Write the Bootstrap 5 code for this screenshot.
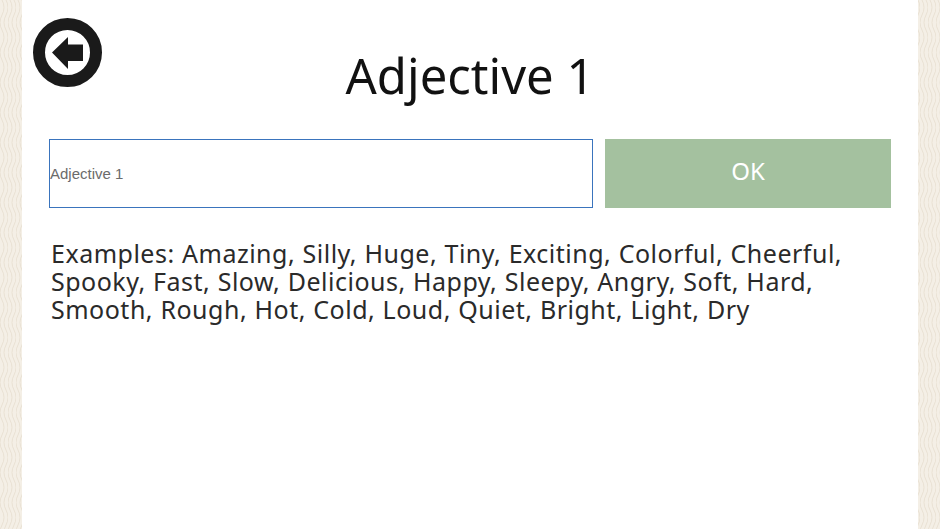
<!DOCTYPE html>
<html lang="en">
<head>
<meta charset="utf-8">
<title>Adjective 1</title>
<link rel="stylesheet" href="https://cdn.jsdelivr.net/npm/bootstrap@5.3.0/dist/css/bootstrap.min.css">
<style>
html,body{height:100%;overflow:hidden}
body{background-color:#f4efe6;background-image:url("data:image/svg+xml,%3Csvg xmlns='http://www.w3.org/2000/svg' width='8' height='30'%3E%3Cpath d='M2 0q4 7.500 0 15t0 15M6 0q4 7.500 0 15t0 15' fill='none' stroke='%23e9e1d3' stroke-width='1'/%3E%3C/svg%3E");font-family:"Noto Sans",sans-serif;color:#1c1c1c}
.sheet{width:896px;height:529px;margin-left:22px;background:#fff;padding:0 27px;position:relative}
.back-btn{position:absolute;left:11px;top:18px;width:70px;height:70px;display:block}
.head-title{font-size:49px;font-weight:400;line-height:60px;margin:0;padding-top:45px;height:139px;text-align:center;color:#111;font-family:"Noto Sans",sans-serif}
.word-input.form-control{width:544px;height:69px;border:1px solid #3a74bd;border-radius:0;padding:0;font-family:"Liberation Sans",sans-serif;font-size:15px;color:#666;flex:none;box-shadow:none}
.word-input.form-control::placeholder{color:#6b6b6b;opacity:1}
.ok-btn.btn{width:286px;height:69px;background:#a4c19f;border:0;border-radius:0;color:#fff;font-size:24px;padding:0 0 6px;margin-left:12px}
.hints{font-size:25px;letter-spacing:.5px;word-spacing:.4px;line-height:28px;color:#2a2a2a;margin:31px 0 0 2px;white-space:nowrap}
</style>
</head>
<body>
<div class="sheet">
<a href="#" class="back-btn" aria-label="Back">
<svg viewBox="0 0 70 70" width="70" height="70"><circle cx="34.500" cy="34.500" r="28.500" fill="#fff" stroke="#1a1a1a" stroke-width="12"/><path d="M19 34.500 35 19V26.500H50V43H35V51Z" fill="#1a1a1a"/></svg>
</a>
<h1 class="head-title">Adjective 1</h1>
<div class="d-flex">
<input class="form-control word-input" type="text" placeholder="Adjective 1">
<button class="btn ok-btn" type="button">OK</button>
</div>
<p class="hints">Examples: Amazing, Silly, Huge, Tiny, Exciting, Colorful, Cheerful,<br>Spooky, Fast, Slow, Delicious, Happy, Sleepy, Angry, Soft, Hard,<br>Smooth, Rough, Hot, Cold, Loud, Quiet, Bright, Light, Dry</p>
</div>
<script src="https://cdn.jsdelivr.net/npm/bootstrap@5.3.0/dist/js/bootstrap.bundle.min.js"></script>
</body>
</html>
